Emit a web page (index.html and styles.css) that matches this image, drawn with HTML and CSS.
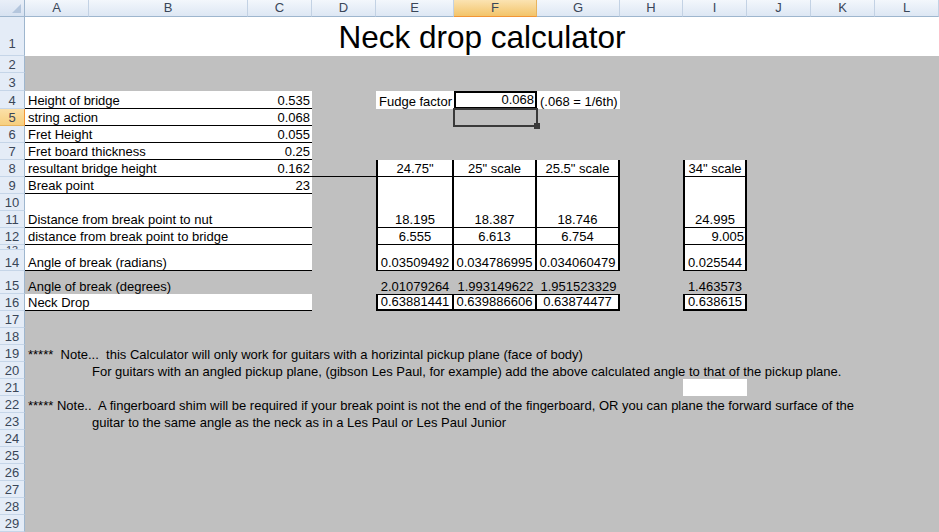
FILE: index.html
```html
<!DOCTYPE html>
<html>
<head>
<meta charset="utf-8">
<title>Neck drop calculator</title>
<link rel="stylesheet" href="styles.css">
</head>
<body>
<div class="sheet">
  <div class="corner"></div>
  <div class="ch xa">A</div>
  <div class="ch xb">B</div>
  <div class="ch xc">C</div>
  <div class="ch xd">D</div>
  <div class="ch xe">E</div>
  <div class="ch xf active">F</div>
  <div class="ch xg">G</div>
  <div class="ch xh">H</div>
  <div class="ch xi">I</div>
  <div class="ch xj">J</div>
  <div class="ch xk">K</div>
  <div class="ch xl">L</div>

  <div class="rh y1 tall">1</div>
  <div class="rh y2">2</div>
  <div class="rh y3">3</div>
  <div class="rh y4">4</div>
  <div class="rh y5 active">5</div>
  <div class="rh y6">6</div>
  <div class="rh y7">7</div>
  <div class="rh y8">8</div>
  <div class="rh y9">9</div>
  <div class="rh y10">10</div>
  <div class="rh y11">11</div>
  <div class="rh y12">12</div>
  <div class="rh y13 tiny">13</div>
  <div class="rh y14">14</div>
  <div class="rh y15">15</div>
  <div class="rh y16">16</div>
  <div class="rh y17">17</div>
  <div class="rh y18">18</div>
  <div class="rh y19">19</div>
  <div class="rh y20">20</div>
  <div class="rh y21">21</div>
  <div class="rh y22">22</div>
  <div class="rh y23">23</div>
  <div class="rh y24">24</div>
  <div class="rh y25">25</div>
  <div class="rh y26">26</div>
  <div class="rh y27">27</div>
  <div class="rh y28">28</div>
  <div class="rh y29">29</div>

  <div class="title y1">Neck drop calculator</div>

  <!-- left table -->
  <div class="lt y4 line"><span>Height of bridge</span><span>0.535</span></div>
  <div class="lt y5 line"><span>string action</span><span>0.068</span></div>
  <div class="lt y6 line"><span>Fret Height</span><span>0.055</span></div>
  <div class="lt y7 line"><span>Fret board thickness</span><span>0.25</span></div>
  <div class="lt y8 line"><span>resultant bridge height</span><span>0.162</span></div>
  <div class="dline y8"></div>
  <div class="lt y9 line"><span>Break point</span><span>23</span></div>
  <div class="lt y10"></div>
  <div class="lt y11 line"><span>Distance from break point to nut</span></div>
  <div class="lt y12 line"><span>distance from break point to bridge</span></div>
  <div class="lt y13"></div>
  <div class="lt y14 line"><span>Angle of break (radians)</span></div>
  <div class="lt y15 grey"><span>Angle of break (degrees)</span></div>
  <div class="lt y16 line"><span>Neck Drop</span></div>

  <!-- fudge factor -->
  <div class="plain xe y4">Fudge factor</div>
  <div class="fudge xf y4">0.068</div>
  <div class="plain xg y4">(.068 = 1/6th)</div>
  <div class="selection xf y5"></div>

  <!-- scale table -->
  <div class="tc xe y8 first hline">24.75"</div>
  <div class="tc xf y8 hline">25" scale</div>
  <div class="tc xg y8 hline">25.5" scale</div>
  <div class="tc xi y8 first hline">34" scale</div>

  <div class="tc xe y9-11 first hline">18.195</div>
  <div class="tc xf y9-11 hline">18.387</div>
  <div class="tc xg y9-11 hline">18.746</div>
  <div class="tc xi y9-11 first hline">24.995</div>

  <div class="tc xe y12 first hline">6.555</div>
  <div class="tc xf y12 hline">6.613</div>
  <div class="tc xg y12 hline">6.754</div>
  <div class="tc xi y12 first hline right">9.005</div>

  <div class="tc xe y13-14 first hline">0.03509492</div>
  <div class="tc xf y13-14 hline">0.034786995</div>
  <div class="tc xg y13-14 hline">0.034060479</div>
  <div class="tc xi y13-14 first hline">0.025544</div>

  <div class="val xe y15">2.01079264</div>
  <div class="val xf y15">1.993149622</div>
  <div class="val xg y15">1.951523329</div>
  <div class="val xi y15">1.463573</div>

  <div class="box xe y16 first">0.63881441</div>
  <div class="box xf y16">0.639886606</div>
  <div class="box xg y16">0.63874477</div>
  <div class="box xi y16 first">0.638615</div>

  <div class="blank xi y21"></div>

  <!-- notes -->
  <div class="note from-a y19">*****  Note...  this Calculator will only work for guitars with a horizintal pickup plane (face of body)</div>
  <div class="note from-b y20">For guitars with an angled pickup plane, (gibson Les Paul, for example) add the above calculated angle to that of the pickup plane.</div>
  <div class="note from-a y22">***** Note..  A fingerboard shim will be required if your break point is not the end of the fingerboard, OR you can plane the forward surface of the</div>
  <div class="note from-b y23">guitar to the same angle as the neck as in a Les Paul or Les Paul Junior</div>
</div>
</body>
</html>
```

FILE: styles.css
```css
html, body {
  margin: 0;
  padding: 0;
}

body {
  font-family: "Liberation Sans", Arial, sans-serif;
  font-size: 13px;
  color: #000;
  background: #c0c0c0;
}

.sheet {
  display: grid;
  width: 939px;
  height: 532px;
  overflow: hidden;
  background: #c0c0c0;
  grid-template-columns:
    [rh] 25px [a] 64px [b] 159px [c] 64px [d] 64px [e] 78px [f] 83px
    [g] 83px [h] 63px [i] 64px [j] 64px [k] 64px [l] 64px [end];
  grid-template-rows:
    [hdr] 17px [r1] 39px [r2] 17px [r3] 18px [r4] 18px [r5] 17px [r6] 17px
    [r7] 17px [r8] 17px [r9] 17px [r10] 17px [r11] 17px [r12] 17px [r13] 5px
    [r14] 21px [r15] 23px [r16] 17px [r17] 17px [r18] 17px [r19] 17px
    [r20] 17px [r21] 17px [r22] 17px [r23] 17px [r24] 17px [r25] 17px
    [r26] 17px [r27] 17px [r28] 17px [r29] 17px [bottom];
}

.sheet > div {
  box-sizing: border-box;
  min-width: 0;
  line-height: 15px;
}

/* column placement */
.xa { grid-column: a; }
.xb { grid-column: b; }
.xc { grid-column: c; }
.xd { grid-column: d; }
.xe { grid-column: e; }
.xf { grid-column: f; }
.xg { grid-column: g; }
.xh { grid-column: h; }
.xi { grid-column: i; }
.xj { grid-column: j; }
.xk { grid-column: k; }
.xl { grid-column: l; }

/* row placement */
.y1 { grid-row: r1; }
.y2 { grid-row: r2; }
.y3 { grid-row: r3; }
.y4 { grid-row: r4; }
.y5 { grid-row: r5; }
.y6 { grid-row: r6; }
.y7 { grid-row: r7; }
.y8 { grid-row: r8; }
.y9 { grid-row: r9; }
.y10 { grid-row: r10; }
.y11 { grid-row: r11; }
.y12 { grid-row: r12; }
.y13 { grid-row: r13; }
.y14 { grid-row: r14; }
.y15 { grid-row: r15; }
.y16 { grid-row: r16; }
.y17 { grid-row: r17; }
.y18 { grid-row: r18; }
.y19 { grid-row: r19; }
.y20 { grid-row: r20; }
.y21 { grid-row: r21; }
.y22 { grid-row: r22; }
.y23 { grid-row: r23; }
.y24 { grid-row: r24; }
.y25 { grid-row: r25; }
.y26 { grid-row: r26; }
.y27 { grid-row: r27; }
.y28 { grid-row: r28; }
.y29 { grid-row: r29; }
.y9-11 { grid-row: r9 / r12; }
.y13-14 { grid-row: r13 / r15; }

/* headers */
.corner {
  grid-row: hdr;
  grid-column: rh;
  background: linear-gradient(#e9eff8, #d7e2f1);
  border-right: 1px solid #9eb6ce;
  border-bottom: 1px solid #9eb6ce;
  position: relative;
}

.corner::after {
  content: "";
  position: absolute;
  right: 3px;
  bottom: 3px;
  width: 0;
  height: 0;
  border-left: 9px solid transparent;
  border-bottom: 9px solid #b4c6dd;
}

.ch {
  grid-row: hdr;
  background: linear-gradient(#f3f7fc, #dde7f4);
  border-right: 1px solid #c3d2e4;
  border-bottom: 1px solid #9eb6ce;
  color: #3a4658;
  text-align: center;
  line-height: 16px !important;
}

.ch.active {
  background: linear-gradient(#fbe3b2, #f3c46a);
  border-bottom-color: #f29536;
  border-right-color: #e8b45e;
}

.rh {
  grid-column: rh;
  background: #e4ecf7;
  border-right: 1px solid #9eb6ce;
  border-bottom: 1px solid #c5d5e8;
  color: #3a4658;
  display: flex;
  align-items: flex-end;
  justify-content: center;
  overflow: hidden;
}

.rh.tall {
  padding-bottom: 4px;
}

.rh.tiny {
  align-items: flex-start;
  line-height: 10px !important;
  font-size: 11px;
}

.rh.active {
  background: linear-gradient(#fbe0a8, #f6cf7f);
  border-bottom-color: #e8b45e;
  border-right-color: #f29536;
}

/* title */
.title {
  grid-column: a / end;
  background: #fff;
  font-size: 31.5px;
  line-height: 37px !important;
  display: flex;
  align-items: flex-end;
  justify-content: center;
}

/* left table */
.lt {
  grid-column: a / d;
  background: #fff;
  display: flex;
  justify-content: space-between;
  align-items: flex-end;
  padding: 0 2px 0 3px;
  white-space: pre;
}

.lt.line {
  border-bottom: 1px solid #000;
}

.lt.grey {
  background: transparent;
}

.dline {
  grid-column: d;
  border-bottom: 1px solid #000;
}

/* fudge factor */
.plain {
  background: #fff;
  display: flex;
  align-items: flex-end;
  padding: 0 2px 0 3px;
  white-space: pre;
}

.fudge {
  background: #fff;
  border: 2px solid #000;
  display: flex;
  align-items: flex-end;
  justify-content: flex-end;
  padding-right: 1px;
  line-height: 14px !important;
}

.selection {
  margin: -1px -1px -1px -1px;
  border: 2px solid #3a3a3a;
  position: relative;
  z-index: 1;
}

.selection::after {
  content: "";
  position: absolute;
  right: -4px;
  bottom: -4px;
  width: 6px;
  height: 6px;
  background: #3a3a3a;
}

/* scale table */
.tc {
  background: #fff;
  border-right: 2px solid #000;
  display: flex;
  align-items: flex-end;
  justify-content: center;
  white-space: pre;
}

.tc.first {
  border-left: 2px solid #000;
}

.tc.hline {
  border-bottom: 1px solid #000;
}

.tc.right {
  justify-content: flex-end;
  padding-right: 1px;
}

.val {
  display: flex;
  align-items: flex-end;
  justify-content: center;
  white-space: pre;
}

.box {
  background: #fff;
  border: 2px solid #000;
  border-top-width: 1px;
  border-left: none;
  display: flex;
  align-items: flex-end;
  justify-content: center;
  white-space: pre;
  line-height: 14px !important;
}

.box.first {
  border-left: 2px solid #000;
}

.blank {
  background: #fff;
}

/* notes */
.note {
  display: flex;
  align-items: flex-end;
  padding-left: 3px;
  white-space: pre;
}

.from-a {
  grid-column: a / end;
}

.from-b {
  grid-column: b / end;
}
```
